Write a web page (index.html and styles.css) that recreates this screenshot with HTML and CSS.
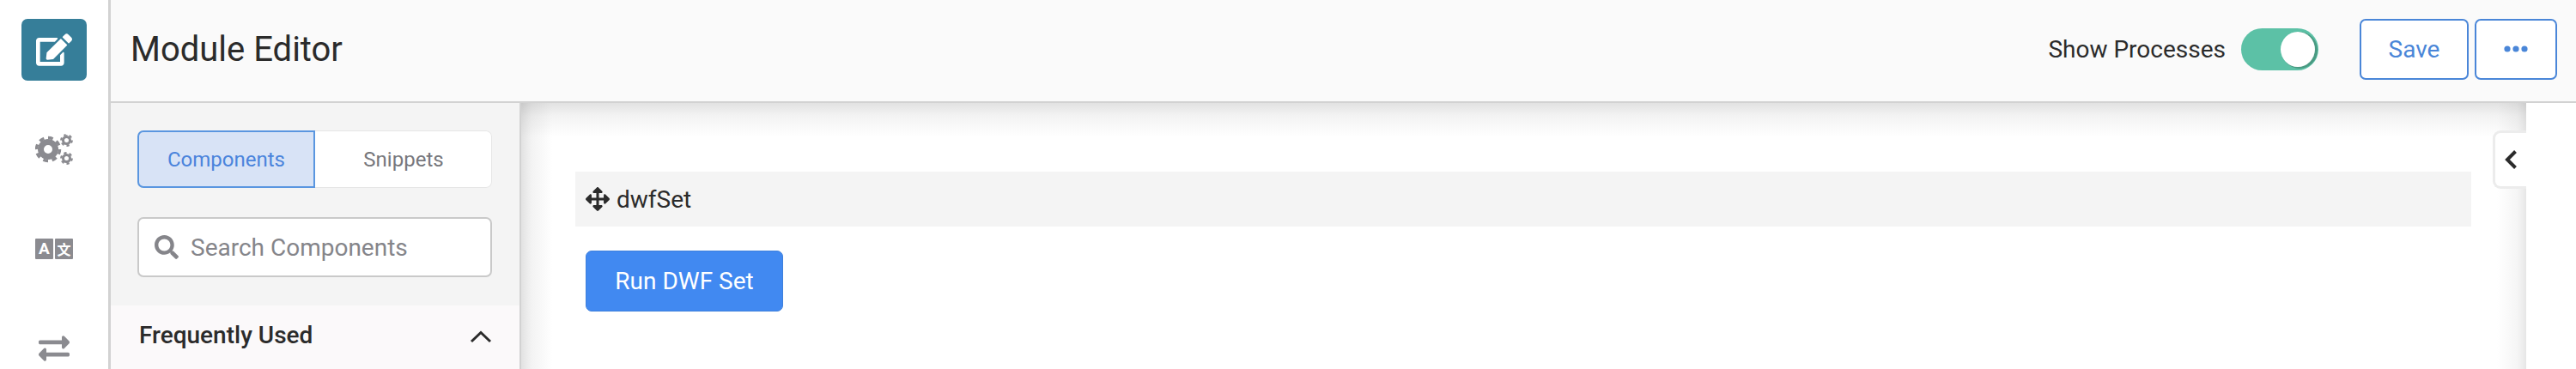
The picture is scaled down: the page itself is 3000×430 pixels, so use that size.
FILE: index.html
```html
<!DOCTYPE html>
<html lang="en">
<head>
    <meta charset="UTF-8">
    <meta name="viewport" content="width=device-width, initial-scale=1.0">
    <title>Module Editor</title>
    <link rel="stylesheet" href="styles.css">
</head>
<body>
    <div class="app">
        <!-- Left rail -->
        <nav class="rail">
            <div class="rail-item">
                <div class="rail-active">
                    <svg class="icon-edit" viewBox="0 0 576 512"><path d="M402.6 83.2l90.2 90.2c3.8 3.8 3.8 10 0 13.8L274.4 405.6l-92.8 10.3c-12.4 1.4-22.9-9.1-21.5-21.5l10.3-92.8L388.8 83.2c3.8-3.8 10-3.8 13.8 0zm162-22.9l-48.8-48.8c-15.2-15.2-39.9-15.2-55.2 0l-35.4 35.4c-3.8 3.8-3.8 10 0 13.8l90.2 90.2c3.8 3.8 10 3.8 13.8 0l35.4-35.4c15.2-15.3 15.2-40 0-55.2zM384 346.2V448H64V128h229.8c3.2 0 6.2-1.3 8.5-3.5l40-40c7.6-7.6 2.2-20.5-8.5-20.5H48C21.5 64 0 85.5 0 112v352c0 26.5 21.5 48 48 48h352c26.5 0 48-21.5 48-48V306.2c0-10.7-12.9-16-20.5-8.5l-40 40c-2.2 2.3-3.5 5.3-3.5 8.5z"/></svg>
                </div>
            </div>
            <div class="rail-item">
                <svg class="icon-gears" viewBox="0 0 44 36">
                    <circle class="gear-ring" cx="15" cy="18" r="8.5"/>
                    <circle class="gear-teeth" cx="15" cy="18" r="13.5" pathLength="16"/>
                    <circle class="gear-ring-small" cx="36.5" cy="7.5" r="4"/>
                    <circle class="gear-teeth-small" cx="36.5" cy="7.5" r="6.2" pathLength="12"/>
                    <circle class="gear-ring-small" cx="36.5" cy="28.5" r="4"/>
                    <circle class="gear-teeth-small" cx="36.5" cy="28.5" r="6.2" pathLength="12"/>
                </svg>
            </div>
            <div class="rail-item">
                <div class="lang-icon">
                    <span class="lang-box">A</span>
                    <span class="lang-box lang-cjk">文</span>
                </div>
            </div>
            <div class="rail-item">
                <svg class="icon-exchange" viewBox="0 0 512 512" preserveAspectRatio="none"><path d="M0 168v-16c0-13.255 10.745-24 24-24h360V80c0-21.367 25.899-32.042 40.971-16.971l80 80c9.372 9.373 9.372 24.569 0 33.941l-80 80C409.956 271.982 384 261.456 384 240v-48H24c-13.255 0-24-10.745-24-24zm488 152H128v-48c0-21.314-25.862-32.08-40.971-16.971l-80 80c-9.372 9.373-9.372 24.569 0 33.941l80 80C102.057 463.997 128 453.437 128 432v-48h360c13.255 0 24-10.745 24-24v-16c0-13.255-10.745-24-24-24z"/></svg>
            </div>
        </nav>

        <div class="content">
            <!-- Top bar -->
            <header class="topbar">
                <h1 class="title">Module Editor</h1>
                <div class="topbar-actions">
                    <span class="toggle-label">Show Processes</span>
                    <div class="toggle"><div class="toggle-knob"></div></div>
                    <button class="btn-outline btn-save">Save</button>
                    <button class="btn-outline btn-more">
                        <svg class="icon-dots" viewBox="0 0 28 8"><circle cx="4" cy="4" r="3.6"/><circle cx="14" cy="4" r="3.6"/><circle cx="24" cy="4" r="3.6"/></svg>
                    </button>
                </div>
            </header>

            <div class="body">
                <!-- Components sidebar -->
                <aside class="sidebar">
                    <div class="sidebar-top">
                        <div class="tabs">
                            <div class="tab tab-active">Components</div>
                            <div class="tab">Snippets</div>
                        </div>
                        <div class="search">
                            <svg class="icon-search" viewBox="0 0 512 512"><path d="M505 442.7L405.3 343c-4.5-4.5-10.6-7-17-7H372c27.6-35.3 44-79.7 44-128C416 93.1 322.9 0 208 0S0 93.1 0 208s93.1 208 208 208c48.3 0 92.7-16.4 128-44v16.3c0 6.4 2.5 12.5 7 17l99.7 99.7c9.4 9.4 24.6 9.4 33.9 0l28.3-28.3c9.4-9.4 9.4-24.6.1-34zM208 336c-70.7 0-128-57.2-128-128 0-70.7 57.2-128 128-128 70.7 0 128 57.2 128 128 0 70.7-57.2 128-128 128z"/></svg>
                            <span>Search Components</span>
                        </div>
                    </div>
                    <div class="section">
                        <span class="section-title">Frequently Used</span>
                        <svg class="icon-up" viewBox="0 0 26 15"><path d="M2 13L13 2.5 24 13"/></svg>
                    </div>
                </aside>

                <!-- Canvas -->
                <main class="canvas">
                    <div class="set-bar">
                        <svg class="icon-move" viewBox="0 0 512 512"><path d="M352.201 425.775l-79.196 79.196c-9.373 9.373-24.568 9.373-33.941 0l-79.196-79.196c-15.119-15.119-4.411-40.971 16.971-40.97h51.162L228 284H127.196v51.162c0 21.382-25.851 32.09-40.971 16.971L7.029 272.937c-9.373-9.373-9.373-24.569 0-33.941L86.225 159.8c15.119-15.119 40.971-4.411 40.971 16.971V228H228V127.196h-51.23c-21.382 0-32.09-25.851-16.971-40.971l79.196-79.196c9.373-9.373 24.568-9.373 33.941 0l79.196 79.196c15.119 15.119 4.411 40.971-16.971 40.971h-51.162V228h100.804v-51.162c0-21.382 25.851-32.09 40.97-16.971l79.196 79.196c9.373 9.373 9.373 24.569 0 33.941L425.773 352.2c-15.119 15.119-40.971 4.411-40.97-16.971V284H284v100.804h51.23c21.382 0 32.09 25.851 16.971 40.971z"/></svg>
                        <span>dwfSet</span>
                    </div>
                    <button class="btn-run">Run DWF Set</button>
                    <div class="panel-tab">
                        <svg class="icon-left" viewBox="0 0 15 24"><path d="M12.5 2.5L3 12l9.500 9.500"/></svg>
                    </div>
                </main>

                <aside class="panel"></aside>
            </div>
        </div>
    </div>
</body>
</html>
```

FILE: styles.css
```css
* {
    box-sizing: border-box;
}

html, body {
    margin: 0;
    height: 100%;
    overflow: hidden;
    background-color: white;
    font-family: Roboto, "Liberation Sans", sans-serif;
    color: #2b2b2b;
}

.app {
    display: flex;
    height: 430px;
    overflow: hidden;
}

/* Left rail */
.rail {
    width: 129px;
    flex-shrink: 0;
    overflow: hidden;
    border-right: 3px solid #d2d2d2;
    background-color: white;
}

.rail-item {
    height: 116px;
    display: flex;
    align-items: center;
    justify-content: center;
}

.rail-active {
    width: 76px;
    height: 72px;
    border-radius: 7px;
    background-color: #367e99;
    display: flex;
    align-items: center;
    justify-content: center;
}

.icon-edit {
    width: 42px;
    height: 38px;
    fill: white;
}

.icon-gears {
    width: 44px;
    height: 36px;
    fill: none;
    stroke: #8b8b90;
}

.gear-ring {
    stroke-width: 7;
}

.gear-teeth {
    stroke-width: 3.5;
    stroke-dasharray: 1.1 0.9;
}

.gear-ring-small {
    stroke-width: 3;
}

.gear-teeth-small {
    stroke-width: 2.4;
    stroke-dasharray: 1 1;
}

.lang-icon {
    display: flex;
    gap: 2px;
}

.lang-box {
    width: 21px;
    height: 24px;
    border-radius: 1px;
    background-color: #8b8b90;
    color: white;
    font-size: 19px;
    font-weight: 700;
    line-height: 24px;
    text-align: center;
}

.lang-cjk {
    font-family: "Noto Sans CJK SC", sans-serif;
    font-size: 16px;
}

.icon-exchange {
    width: 36px;
    height: 38px;
    fill: #8b8b90;
}

.content {
    flex: 1;
    min-width: 0;
    display: flex;
    flex-direction: column;
}

/* Top bar */
.topbar {
    height: 120px;
    flex-shrink: 0;
    display: flex;
    align-items: center;
    justify-content: space-between;
    padding: 0 22px 4px 23px;
    background-color: #fafafa;
    border-bottom: 2px solid #d2d2d2;
}

.title {
    margin: 0;
    font-size: 40px;
    font-weight: 400;
    color: #2b2b2b;
}

.topbar-actions {
    display: flex;
    align-items: center;
}

.toggle-label {
    font-size: 28px;
    margin-right: 18px;
}

.toggle {
    width: 90px;
    height: 49px;
    margin-right: 48px;
    padding: 4px;
    border-radius: 25px;
    background-color: #5cc1a6;
    display: flex;
    justify-content: flex-end;
}

.toggle-knob {
    width: 40px;
    height: 41px;
    border-radius: 50%;
    background-color: white;
    box-shadow: 2px 1px 0 1px #4a9a82;
}

.btn-outline {
    height: 71px;
    border: 2px solid #4a86d8;
    border-radius: 7px;
    background-color: white;
    color: #4a86d8;
    font-family: inherit;
    font-size: 28px;
    padding: 0;
    display: flex;
    align-items: center;
    justify-content: center;
}

.btn-save {
    width: 127px;
    margin-right: 7px;
}

.btn-more {
    width: 96px;
}

.icon-dots {
    width: 28px;
    height: 8px;
    fill: #4a86d8;
}

.body {
    flex: 1;
    min-height: 0;
    display: flex;
}

/* Components sidebar */
.sidebar {
    width: 478px;
    flex-shrink: 0;
    border-right: 2px solid #d2d2d2;
    background-color: #f4f4f4;
    display: flex;
    flex-direction: column;
}

.sidebar-top {
    padding: 32px 32px 33px 31px;
}

.tabs {
    height: 67px;
    display: flex;
    border-radius: 7px;
    background-color: white;
    box-shadow: 0 0 0 1px #e6e6e6 inset;
    font-size: 24px;
    color: #77777c;
}

.tab {
    flex: 1;
    display: flex;
    align-items: center;
    justify-content: center;
}

.tab-active {
    flex: none;
    width: 207px;
    border: 2px solid #5a96e0;
    border-radius: 7px 0 0 7px;
    background-color: #d8e3f6;
    color: #4a84dc;
}

.search {
    height: 70px;
    margin-top: 34px;
    padding-left: 18px;
    display: flex;
    align-items: center;
    gap: 14px;
    border: 2px solid #c9c9c9;
    border-radius: 7px;
    background-color: white;
    font-size: 28px;
    color: #85858a;
}

.icon-search {
    width: 28px;
    height: 28px;
    fill: #85858a;
}

.section {
    flex: 1;
    display: flex;
    justify-content: space-between;
    padding: 19px 32px 0 33px;
    background-color: #fbf9fa;
}

.section-title {
    font-size: 28px;
    font-weight: 500;
    line-height: 32px;
    color: #2b2b2b;
}

.icon-up {
    width: 26px;
    height: 15px;
    margin-top: 10px;
    fill: none;
    stroke: #2b2b2b;
    stroke-width: 3;
}

/* Canvas: soft shade from the top, left and right edges */
.canvas {
    position: relative;
    flex: 1;
    min-width: 0;
    padding: 80px 64px 0 63px;
    background-color: white;
    background-image:
        linear-gradient(to bottom, #e2e2e2, #f3f3f3 15px, white 40px),
        linear-gradient(to right, #e2e2e2, #f3f3f3 12px, white 36px),
        linear-gradient(to left, #e6e6e6, #f5f5f5 10px, white 34px);
    background-blend-mode: multiply;
}

.set-bar {
    height: 64px;
    padding-left: 12px;
    display: flex;
    align-items: center;
    gap: 8px;
    background-color: #f4f4f4;
    font-size: 28px;
}

.icon-move {
    width: 28px;
    height: 28px;
    fill: #2b2b2b;
}

.btn-run {
    display: block;
    width: 230px;
    height: 71px;
    margin: 28px 0 0 12px;
    border: 1px solid #3f80dc;
    border-radius: 7px;
    background-color: #4189f1;
    color: white;
    font-family: inherit;
    font-size: 28px;
}

/* Tab that collapses the right panel, lies over the canvas edge */
.panel-tab {
    position: absolute;
    top: 32px;
    right: 0;
    width: 39px;
    height: 68px;
    display: flex;
    align-items: center;
    justify-content: center;
    border: 3px solid #ececec;
    border-right: none;
    border-radius: 9px 0 0 9px;
    background-color: white;
}

.icon-left {
    width: 15px;
    height: 24px;
    fill: none;
    stroke: #2b2b2b;
    stroke-width: 4;
}

.panel {
    width: 58px;
    flex-shrink: 0;
    background-color: white;
}
```
